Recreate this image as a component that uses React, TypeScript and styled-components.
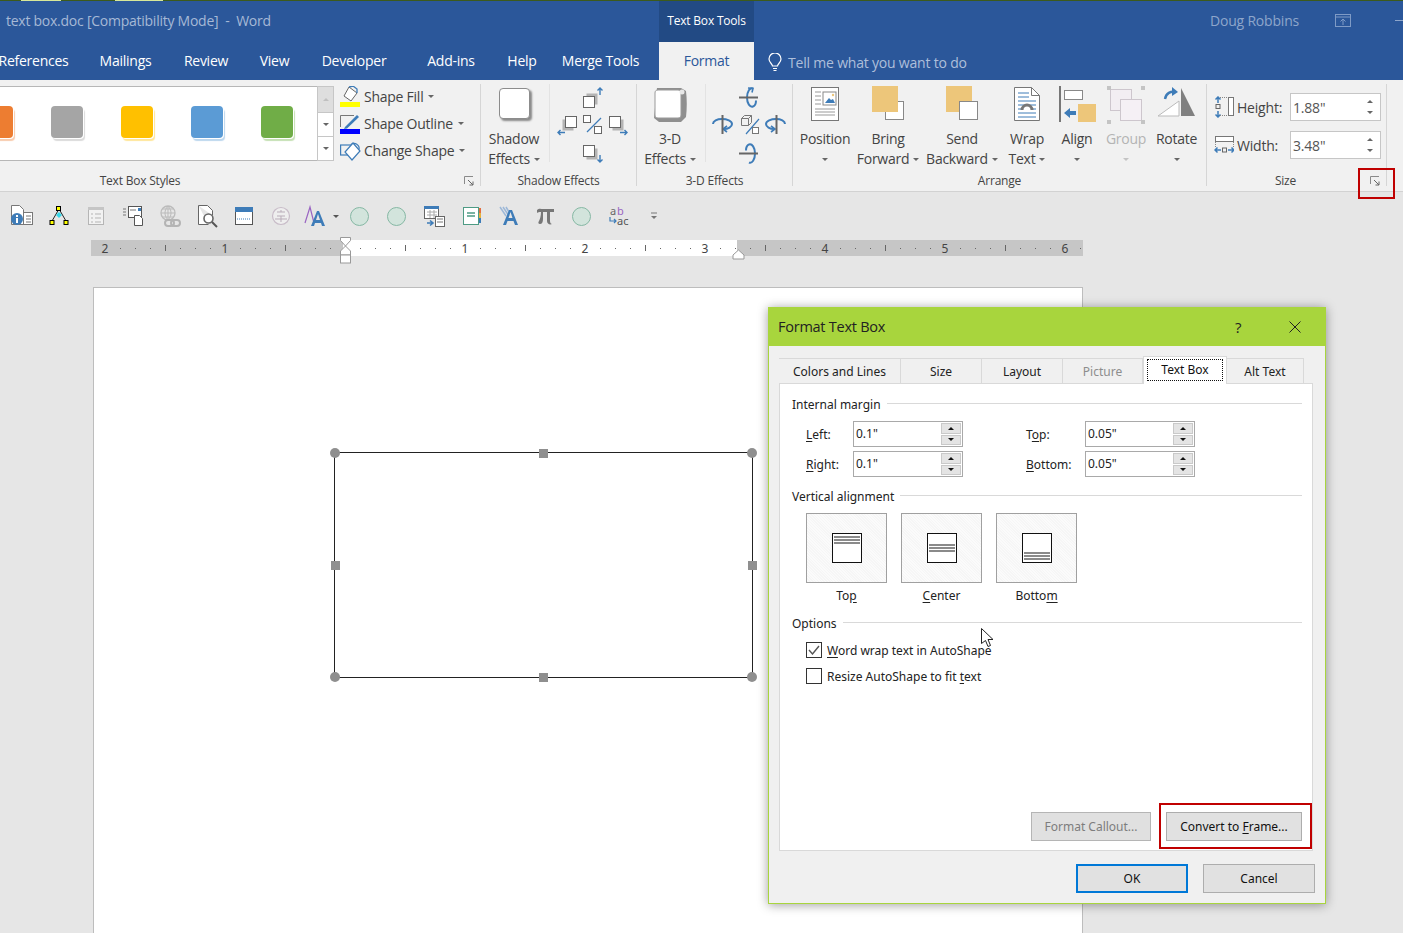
import React from "react";
import styled, { createGlobalStyle } from "styled-components";

const Global = createGlobalStyle`
  html, body {
    margin: 0;
    height: 933px;
    overflow: hidden;
    background: #e6e6e6;
  }
`;

const uiFont = `"Open Sans", "Noto Sans", Arial, sans-serif`;
const dialogFont = `"Noto Sans", "Open Sans", Arial, sans-serif`;

const Screen = styled.div`
  position: relative;
  width: 1403px;
  height: 933px;
  overflow: hidden;
  font-family: ${uiFont};
  background: #e6e6e6;
`;

const TopEdge = styled.div`
  height: 1px;
  background: #3c5a1c;
  display: flex;
`;

const EdgeAccent = styled.span<{ $w: number; $ml: number }>`
  width: ${(p) => p.$w}px;
  margin-left: ${(p) => p.$ml}px;
  background: #d8e89a;
`;

const TitleBar = styled.div`
  height: 79px;
  background: #2b579a;
  display: flex;
  flex-direction: column;
`;

const TitleRow = styled.div`
  height: 41px;
  display: flex;
  align-items: stretch;
`;

const DocTitle = styled.div`
  width: 653px;
  padding-left: 6px;
  line-height: 39px;
  font-size: 14px;
  letter-spacing: -0.25px;
  color: #a6b9d6;
  white-space: pre;
`;

const ContextHead = styled.div`
  width: 95px;
  background: #224a84;
  color: #fff;
  font-size: 12px;
  letter-spacing: -0.2px;
  line-height: 39px;
  text-align: center;
`;

const Account = styled.div`
  margin-left: auto;
  display: flex;
  align-items: center;
  height: 39px;
  color: #8ea6cb;
  font-size: 14px;
  letter-spacing: -0.2px;
`;

const UserName = styled.span`
  width: 125px;
  margin-right: 0;
`;

const WinDash = styled.span`
  width: 8px;
  height: 1px;
  margin-left: 44px;
  background: #8ea6cb;
`;

const TabRow = styled.div`
  height: 38px;
  display: flex;
  margin-left: -16px;
`;

const RibbonTab = styled.div<{ $w: number }>`
  width: ${(p) => p.$w}px;
  flex: none;
  text-align: center;
  line-height: 38px;
  color: #fff;
  font-size: 14px;
  letter-spacing: -0.25px;
  white-space: nowrap;
`;

const ActiveTab = styled(RibbonTab)`
  background: #f1f1f1;
  color: #2b579a;
  margin-left: 3px;
`;

const TellMe = styled.div`
  display: flex;
  align-items: center;
  gap: 6px;
  margin-left: 14px;
  color: #aebfdb;
  font-size: 14px;
  letter-spacing: -0.2px;
  padding-top: 2px;
`;

const Ribbon = styled.div`
  position: relative;
  height: 112px;
  box-sizing: border-box;
  background: #f1f1f1;
  border-bottom: 1px solid #d2d2d2;
  display: flex;
  color: #444;
`;

const Group = styled.div<{ $w: number }>`
  position: relative;
  width: ${(p) => p.$w}px;
  flex: none;
  display: flex;
  flex-direction: column;
`;

const GroupBody = styled.div`
  height: 91px;
  display: flex;
  position: relative;
`;

const GroupLabel = styled.div`
  height: 20px;
  line-height: 20px;
  text-align: center;
  font-size: 12px;
  letter-spacing: -0.2px;
  color: #444;
`;

const GroupSep = styled.div`
  width: 1px;
  flex: none;
  margin: 4px 0 5px;
  background: #d6d6d6;
`;

const InnerSep = styled.div<{ $ml: number }>`
  width: 1px;
  flex: none;
  height: 78px;
  margin: 4px 0 0 ${(p) => p.$ml}px;
  background: #e3e3e3;
`;

const Launcher = styled.svg`
  position: absolute;
  right: 6px;
  bottom: 5px;
`;

const Gallery = styled.div`
  margin-top: 6px;
  height: 75px;
  width: 317px;
  flex: none;
  box-sizing: border-box;
  background: #fff;
  border: 1px solid #b7b7b7;
  border-left: none;
  border-right: none;
  overflow: hidden;
  display: flex;
  align-items: center;
  gap: 38px;
  padding: 0 0 3px;
`;

const Swatch = styled.div<{ $c: string; $glow: string; $first?: boolean }>`
  width: 32px;
  height: 32px;
  flex: none;
  border-radius: 4px;
  background: ${(p) => p.$c};
  margin-left: ${(p) => (p.$first ? "-19px" : "0")};
  box-shadow: 1px 1px 0 #fff, 2px 3px 1px ${(p) => p.$glow};
`;

const ScrollStrip = styled.div`
  margin-top: 6px;
  width: 17px;
  flex: none;
  display: flex;
  flex-direction: column;
`;

const ScrollBtn = styled.div<{ $h: number; $off?: boolean }>`
  height: ${(p) => p.$h}px;
  box-sizing: border-box;
  border: 1px solid #c6c6c6;
  border-top-width: ${(p) => (p.$off ? "1px" : "0")};
  background: ${(p) => (p.$off ? "#dedede" : "#fff")};
  display: flex;
  align-items: center;
  justify-content: center;
`;

const Caret = styled.span<{ $c?: string; $up?: boolean }>`
  display: inline-block;
  flex: none;
  width: 0;
  height: 0;
  border-left: 3.5px solid transparent;
  border-right: 3.5px solid transparent;
  ${(p) => (p.$up ? "border-bottom" : "border-top")}: 3.5px solid ${(p) => p.$c || "#666"};
`;

const CommandStack = styled.div`
  margin: 3px 0 0 6px;
  display: flex;
  flex-direction: column;
`;

const Command = styled.div`
  height: 27px;
  display: flex;
  align-items: center;
  gap: 3px;
  font-size: 14px;
  letter-spacing: -0.25px;
  white-space: nowrap;

  & > svg {
    margin-right: 0;
  }
  & > span:last-child {
    margin-left: 2px;
  }
`;

const BigButton = styled.div<{ $w: number; $ml?: number; $off?: boolean }>`
  width: ${(p) => p.$w}px;
  margin-left: ${(p) => p.$ml || 0}px;
  flex: none;
  padding-top: 6px;
  display: flex;
  flex-direction: column;
  align-items: center;
  font-size: 14px;
  letter-spacing: -0.25px;
  color: ${(p) => (p.$off ? "#b4b4b4" : "#444")};
`;

const BigIcon = styled.div`
  height: 43px;
  display: flex;
  align-items: flex-start;
  justify-content: center;
`;

const ShadowTile = styled.div`
  width: 31px;
  height: 31px;
  margin-top: 2px;
  box-sizing: border-box;
  background: #fff;
  border: 1px solid #8c8c8c;
  border-radius: 4px;
  box-shadow: 2px 2px 2px #8a8a8a;
`;

const Line = styled.div`
  height: 20px;
  line-height: 20px;
  white-space: nowrap;
  display: flex;
  align-items: center;
  gap: 4px;
`;

const SideDrawing = styled.svg<{ $ml: number }>`
  margin: 5px 0 0 ${(p) => p.$ml}px;
  flex: none;
`;

const SizeStack = styled.div`
  padding: 13px 0 0 7px;
  display: flex;
  flex-direction: column;
  gap: 10px;
`;

const SizeRow = styled.div`
  display: flex;
  align-items: center;
  height: 28px;
  font-size: 14px;
  letter-spacing: -0.2px;
`;

const SizeName = styled.span`
  width: 53px;
  margin-left: 3px;
`;

const SizeInput = styled.div`
  width: 91px;
  height: 28px;
  box-sizing: border-box;
  background: #fff;
  border: 1px solid #c6c6c6;
  padding-left: 2px;
  display: flex;
  align-items: center;
  justify-content: space-between;
  color: #555;
`;

const SizeSpin = styled.div`
  width: 20px;
  display: flex;
  flex-direction: column;
  align-items: center;
  gap: 8px;
`;

const RedFrame = styled.div`
  position: absolute;
  box-sizing: border-box;
  border: 2px solid #c00000;
`;

const LauncherMark = styled(RedFrame)`
  left: 1358px;
  top: 88px;
  width: 37px;
  height: 31px;
`;

const QuickBar = styled.div`
  height: 48px;
  padding-left: 3px;
  display: flex;
  align-items: center;
`;

const QuickCell = styled.div<{ $w?: number }>`
  width: ${(p) => p.$w || 37}px;
  flex: none;
  height: 26px;
  display: flex;
  align-items: center;
  justify-content: center;
  gap: 7px;
`;

const RoundMark = styled.span`
  width: 17px;
  height: 17px;
  border-radius: 50%;
  background: #d2e4dc;
  border: 1px solid #86b8a4;
`;

const RulerWrap = styled.div`
  height: 16px;
  padding-left: 91px;
  position: relative;
  z-index: 1;

  & > svg {
    display: block;
    overflow: visible;
  }
`;

const Sheet = styled.div`
  margin: 31px 0 0 93px;
  width: 990px;
  height: 646px;
  box-sizing: border-box;
  background: #fff;
  border: 1px solid #bdbdbd;
  border-bottom: none;
  padding: 164px 0 0 240px;
`;

const TextShape = styled.div`
  position: relative;
  width: 419px;
  height: 226px;
  box-sizing: border-box;
  border: 1px solid #222;
`;

const RoundHandle = styled.span<{ $x: string; $y: string }>`
  position: absolute;
  left: ${(p) => p.$x};
  top: ${(p) => p.$y};
  width: 10px;
  height: 10px;
  margin: -5px 0 0 -5px;
  border-radius: 50%;
  background: #8f8f8f;
`;

const SquareHandle = styled(RoundHandle)`
  width: 9px;
  height: 9px;
  margin: -4.5px 0 0 -4.5px;
  border-radius: 0;
`;

const Dialog = styled.div`
  position: absolute;
  left: 768px;
  top: 307px;
  width: 558px;
  height: 597px;
  box-sizing: border-box;
  background: #f0f0f0;
  border: 1px solid #a8d53d;
  border-top: none;
  box-shadow: 0 1px 10px rgba(0, 0, 0, 0.38);
  font-family: ${dialogFont};
  font-size: 12px;
  color: #222;
`;

const DialogTitle = styled.div`
  height: 39px;
  background: #a8d53d;
  display: flex;
  align-items: center;
  padding-left: 9px;
  font-family: ${uiFont};
  font-size: 14.5px;
  letter-spacing: -0.25px;
  color: #222;
`;

const HelpMark = styled.span`
  margin-left: auto;
  width: 20px;
  text-align: center;
  font-size: 15px;
`;

const CloseMark = styled.svg`
  margin: 0 24px 0 41px;
`;

const DialogBody = styled.div`
  padding: 11px 10px 0;
`;

const TabStrip = styled.div`
  height: 26px;
  display: flex;
  align-items: flex-end;
`;

const DialogTab = styled.div<{ $w: number; $off?: boolean }>`
  width: ${(p) => p.$w}px;
  height: 25px;
  box-sizing: border-box;
  border-top: 1px solid #d9d9d9;
  border-right: 1px solid #d9d9d9;
  text-align: center;
  line-height: 25px;
  color: ${(p) => (p.$off ? "#8d8d8d" : "#222")};
`;

const CurrentTab = styled.div`
  position: relative;
  z-index: 1;
  width: 84px;
  height: 28px;
  margin-bottom: -1px;
  box-sizing: border-box;
  background: #fff;
  border: 1px solid #d9d9d9;
  border-bottom: none;
  padding: 2px 3px 3px;
  display: flex;
`;

const FocusLabel = styled.div`
  flex: 1;
  border: 1px dotted #111;
  text-align: center;
  line-height: 19px;
  color: #111;
`;

const Panel = styled.div`
  position: relative;
  width: 534px;
  height: 468px;
  box-sizing: border-box;
  background: #fff;
  border: 1px solid #d9d9d9;
  padding: 11px 10px 9px 12px;
  display: flex;
  flex-direction: column;
`;

const SectionHead = styled.div<{ $mt?: number }>`
  height: 18px;
  margin-top: ${(p) => p.$mt || 0}px;
  display: flex;
  align-items: center;
  gap: 6px;
  flex: none;

  &::after {
    content: "";
    flex: 1;
    height: 1px;
    margin-top: -2px;
    background: #d9d9d9;
  }
`;

const FieldGrid = styled.div`
  margin: 8px 0 0 14px;
  display: grid;
  grid-template-columns: 47px 110px 63px 59px 110px;
  row-gap: 4px;
  align-items: center;
`;

const Key = styled.span`
  text-decoration: underline;
  text-underline-offset: 2px;
`;

const SpinField = styled.div`
  height: 26px;
  box-sizing: border-box;
  border: 1px solid #a9a9a9;
  padding: 1px 1px 1px 2px;
  display: flex;
  align-items: stretch;
  justify-content: space-between;
  line-height: 21px;
`;

const SpinBox = styled.div`
  width: 20px;
  display: flex;
  flex-direction: column;
  gap: 1px;
`;

const SpinBtn = styled.div`
  flex: 1;
  background: #e4e4e4;
  border: 1px solid #c9c9c9;
  display: flex;
  align-items: center;
  justify-content: center;
`;

const AlignRow = styled.div`
  margin: 8px 0 0 14px;
  display: flex;
  gap: 14px;
  flex: none;
`;

const AlignChoice = styled.div`
  width: 81px;
  text-align: center;
  line-height: 16px;
`;

const AlignTile = styled.div`
  height: 70px;
  margin-bottom: 5px;
  box-sizing: border-box;
  border: 1px solid #a0a0a0;
  background: repeating-linear-gradient(45deg, #f6f6f6 0 1px, #fbfbfb 1px 2px);
  display: flex;
  align-items: center;
  justify-content: center;
`;

const AlignPage = styled.div<{ $at: string }>`
  width: 30px;
  height: 30px;
  box-sizing: border-box;
  border: 1px solid #111;
  background: #fff;
  padding: 2px 1px;
  display: flex;
  flex-direction: column;
  justify-content: ${(p) => p.$at};
`;

const AlignLines = styled.div`
  height: 8px;
  background: repeating-linear-gradient(#8a8a8a 0 2px, #fff 2px 3px);
`;

const CheckRow = styled.div<{ $mt: number }>`
  margin: ${(p) => p.$mt}px 0 0 14px;
  height: 16px;
  display: flex;
  align-items: center;
  gap: 5px;
  flex: none;
  white-space: nowrap;
`;

const CheckBox = styled.div`
  width: 16px;
  height: 16px;
  box-sizing: border-box;
  border: 1px solid #333;
  background: #fff;
  display: flex;
  align-items: center;
  justify-content: center;
`;

const PanelActions = styled.div`
  margin-top: auto;
  display: flex;
  justify-content: flex-end;
  gap: 15px;
`;

const PushButton = styled.div<{ $w: number; $off?: boolean }>`
  position: relative;
  width: ${(p) => p.$w}px;
  height: 29px;
  box-sizing: border-box;
  background: ${(p) => (p.$off ? "#e0e0e0" : "#e1e1e1")};
  border: 1px solid ${(p) => (p.$off ? "#b5b5b5" : "#adadad")};
  text-align: center;
  line-height: 28px;
  color: ${(p) => (p.$off ? "#7d7d7d" : "#111")};
`;

const DefaultButton = styled(PushButton)`
  border: 2px solid #0078d7;
  line-height: 26px;
`;

const ButtonMark = styled(RedFrame)`
  left: -8px;
  right: -11px;
  top: -10px;
  bottom: -9px;
`;

const DialogFooter = styled.div`
  width: 536px;
  margin-top: 13px;
  display: flex;
  justify-content: flex-end;
  gap: 15px;
`;

const Pointer = styled.svg`
  position: absolute;
  left: 212px;
  top: 321px;
`;

const blue = "#3e7cb8";
const grayLine = "#7d7d7d";
const sand = "#edc67a";

function LauncherIcon() {
  return (
    <Launcher width="10" height="10" viewBox="0 0 10 10" fill="none">
      <path d="M.5 8V.5H9" stroke="#8a8a8a" />
      <path d="M4 4l5 5M9 5.5V9H5.5" stroke="#666" />
    </Launcher>
  );
}

function FillIcon() {
  return (
    <svg width="21" height="22" viewBox="0 0 21 22" fill="none">
      <path d="M9 1l8 6-6 8-7-5z" fill="#fff" stroke="#666" />
      <path d="M9 1l4-1 4 3v4" stroke="#3e7cb8" strokeWidth="1.3" />
      <rect x="0" y="16" width="20" height="5" fill="#ffff00" />
    </svg>
  );
}

function OutlineIcon() {
  return (
    <svg width="21" height="22" viewBox="0 0 21 22" fill="none">
      <path d="M14 2.5H.5V14" stroke="#777" />
      <path d="M5 14L17 2l2 2L7 15.5l-3 .5z" fill="#3e7cb8" />
      <rect x="0" y="16" width="20" height="5" fill="#0000ff" />
    </svg>
  );
}

function ChangeShapeIcon() {
  return (
    <svg width="21" height="22" viewBox="0 0 21 22" fill="none" stroke="#3e7cb8" strokeWidth="1.2">
      <rect x="0.6" y="5" width="12" height="10" />
      <path d="M11 4.5a5 5 0 0 1 8 5" />
      <path d="M13 3l7 8-8 9-7-8z" fill="#fff" />
    </svg>
  );
}

function NudgeDrawing() {
  const Box = (x: number, y: number, sx: number, sy: number) => (
    <g>
      <rect x={x + sx} y={y + sy} width="11" height="11" fill="#b4b4b4" />
      <rect x={x} y={y} width="11" height="11" fill="#fff" stroke="#666" />
    </g>
  );
  return (
    <SideDrawing $ml={5} width="76" height="80" viewBox="0 0 76 80" fill="none">
      {Box(28.5, 11.5, 3, -3)}
      {Box(10.5, 31.5, -3, 3)}
      {Box(54.5, 31.5, 3, 3)}
      {Box(28.5, 60.5, 3, 3)}
      <rect x="28.5" y="30.5" width="7" height="7" fill="#fff" stroke="#666" />
      <rect x="39.5" y="41.5" width="7" height="7" fill="#fff" stroke="#666" />
      <path d="M32 47l14-14" stroke={blue} strokeWidth="1.2" />
      <path d="M45 10V3M42.500 5.500L45 3l2.500 2.500" stroke={blue} strokeWidth="1.4" />
      <path d="M45 70v7M42.500 74.500L45 77l2.500-2.500" stroke={blue} strokeWidth="1.4" />
      <path d="M10 47.500H3M5.500 45L3 47.500 5.500 50" stroke={blue} strokeWidth="1.4" />
      <path d="M65 47.500h7M69.500 45l2.500 2.500-2.500 2.500" stroke={blue} strokeWidth="1.4" />
    </SideDrawing>
  );
}

function TiltDrawing() {
  return (
    <SideDrawing $ml={4} width="80" height="80" viewBox="0 0 80 80" fill="none">
      <g stroke={blue} strokeWidth="2">
        <path d="M43 3.500c-3-1.500-6 3-6 9s3 10 6 9c2-.7 3-3 3-6" />
        <path d="M38 3l5 .5-1 4" strokeWidth="1.6" />
        <path d="M43 77.500c-3 1.500-6-3-6-9s3-10 6-9c2 .7 3 3 3 6" transform="translate(81 0) scale(-1 1) translate(-1 0)" />
        <path d="M3 39c0-3 4-5 9-5s10 2 10 5-4 5-8 5" />
        <path d="M17 41l-4 3 4 3" strokeWidth="1.6" />
        <path d="M75 39c0-3-4-5-9-5s-10 2-10 5 4 5 8 5" />
        <path d="M61 41l4 3-4 3" strokeWidth="1.6" />
      </g>
      <path d="M29 12.500h19M29 68.500h19M12.500 30v19M66.500 30v19" stroke="#666" strokeWidth="2" />
      <path d="M31.500 33.500h7v7h-7zM31.500 33.500l3-3h7v7l-3 3M38.500 33.500l3-3" stroke="#777" />
      <rect x="42.500" y="42.500" width="6" height="6" stroke="#777" fill="#fff" />
      <path d="M36 49l13-15" stroke={blue} strokeWidth="1.2" />
    </SideDrawing>
  );
}

function CubeTile() {
  return (
    <svg width="36" height="38" viewBox="0 0 36 38" fill="none">
      <path d="M5 2h24l5 3c1 8 1 18 0 26l-5 5H7l-5-4z" fill="#8f8f8f" />
      <path d="M6 4h20c2 0 3 1 3 3v22c0 2-1 3-3 3H6c-2 0-3-1-3-3V7c0-2 1-3 3-3z" fill="#fff" stroke="#999" />
      <circle cx="30" cy="6" r="2.500" fill="#e8e8e8" />
    </svg>
  );
}

function PositionIcon() {
  return (
    <svg width="30" height="36" viewBox="0 0 30 36" fill="none">
      <rect x="1.500" y="1.500" width="27" height="33" fill="#fff" stroke="#777" />
      <path d="M5 6h6M5 10h6M5 14h6M5 18h6M5 23h20M5 26h20M5 29h20" stroke="#999" />
      <rect x="13" y="6" width="13" height="13" fill="#fff" stroke="#888" />
      <path d="M15 17l4-5 2 2 2-1 2 4z" fill={blue} />
      <circle cx="23" cy="9" r="1.200" fill={sand} />
    </svg>
  );
}

function LayerIcon({ front }: { front: boolean }) {
  const sandSq = <rect x="0" y="0" width="26" height="26" fill={sand} />;
  const whiteSq = <rect x="13.500" y="15.500" width="18" height="18" fill="#fff" stroke="#888" />;
  return (
    <svg width="32" height="34" viewBox="0 0 32 34" fill="none">
      {front ? whiteSq : sandSq}
      {front ? sandSq : whiteSq}
    </svg>
  );
}

function WrapIcon() {
  return (
    <svg width="28" height="36" viewBox="0 0 28 36" fill="none">
      <path d="M1.500 1.500h17l8 8v25h-25z" fill="#fff" stroke="#777" />
      <path d="M18.500 1.500v8h8" stroke="#777" />
      <path d="M5 7h11M5 11h11M5 15h18M5 19h6M17 19h6M5 23h4M19 23h4M5 27h18M5 31h18" stroke={blue} />
      <path d="M9 24a5 5 0 0 1 10 0" stroke="#777" strokeWidth="3" />
    </svg>
  );
}

function AlignIcon() {
  return (
    <svg width="37" height="38" viewBox="0 0 37 38" fill="none">
      <path d="M1 0v36" stroke="#777" strokeWidth="2" />
      <rect x="5.500" y="4.500" width="18" height="9" fill="#fff" stroke="#888" />
      <rect x="19" y="18" width="18" height="18" fill={sand} />
      <path d="M5 27l6-5v3h6v4h-6v3z" fill={blue} />
    </svg>
  );
}

function GroupIcon() {
  return (
    <svg width="38" height="38" viewBox="0 0 38 38" fill="none">
      <rect x="3.500" y="3.500" width="21" height="21" fill="#f2eef2" stroke="#cdc6cd" />
      <rect x="13.500" y="13.500" width="21" height="21" fill="#f5f0f5" stroke="#cdc6cd" />
      <path d="M0 0h4v4H0zM34 0h4v4h-4zM0 34h4v4H0zM34 34h4v4h-4z" fill="#c4c4c4" />
    </svg>
  );
}

function RotateIcon() {
  return (
    <svg width="38" height="36" viewBox="0 0 38 36" fill="none">
      <path d="M0 30L21 15v15z" fill="#fff" stroke="#bbb" />
      <path d="M23 2l14 28H23z" fill="#808080" />
      <path d="M7 13c1-6 6-8 10-7" stroke={blue} strokeWidth="2.400" />
      <path d="M14 1l6 5-6 4z" fill={blue} />
    </svg>
  );
}

function HeightIcon() {
  return (
    <svg width="20" height="22" viewBox="0 0 20 22" fill="none">
      <path d="M4 7V1M1.500 3.500L4 1l2.500 2.500M4 15v6M1.500 18.500L4 21l2.500-2.500" stroke={blue} strokeWidth="1.500" />
      <rect x="2" y="8.500" width="4" height="4" stroke="#666" />
      <rect x="14.500" y="1.500" width="5" height="18" fill="#fff" stroke="#777" />
      <path d="M6 1.500h8M6 19.500h8" stroke="#888" strokeDasharray="1 1" />
    </svg>
  );
}

function WidthIcon() {
  return (
    <svg width="20" height="20" viewBox="0 0 20 20" fill="none">
      <rect x="1.500" y="1.500" width="18" height="5" fill="#fff" stroke="#777" />
      <path d="M1.500 7v6M19.500 7v6" stroke="#888" strokeDasharray="1 1" />
      <path d="M7 15H1M3.500 12.500L1 15l2.500 2.500M14 15h6M17.500 12.500L20 15l-2.500 2.500" stroke={blue} strokeWidth="1.500" />
      <rect x="8.500" y="13" width="4" height="4" stroke="#666" />
    </svg>
  );
}

// quick access toolbar glyphs, each drawn in a 24 box
const quickIcons: React.ReactNode[] = [
  <>
    <path d="M1.500 1.500h8l4 4v15h-12z" fill="#fff" stroke="#777" />
    <rect x="13.500" y="8.500" width="9" height="12" fill="#fff" stroke="#777" />
    <path d="M16 12h5M16 15h5M16 18h5" stroke="#777" />
    <circle cx="7" cy="15" r="6" fill={blue} />
    <rect x="6" y="14" width="2" height="5" fill="#fff" />
    <rect x="6" y="11" width="2" height="2" fill="#fff" />
  </>,
  <>
    <path d="M12 5L5 17M12 5l7 12" stroke="#222" />
    <rect x="9.500" y="2.500" width="4" height="4" fill="#ff0" stroke="#000" />
    <rect x="3" y="16.500" width="4" height="4" fill="#ff0" stroke="#000" />
    <rect x="17" y="16.500" width="4" height="4" fill="#ff0" stroke="#000" />
    <path d="M12 8l3 3-3 3-3-3z" fill="#35d6e8" />
  </>,
  <>
    <rect x="4.500" y="3.500" width="15" height="17" fill="#f2f2f2" stroke="#b5b5b5" />
    <rect x="4" y="3" width="16" height="3" fill="#c5c5c5" />
    <path d="M7 10h2M11 10h6M7 14h2M11 14h6M7 18h2M11 18h6" stroke="#b5b5b5" />
  </>,
  <>
    <path d="M2 5h3M2 8h3M2 11h3" stroke="#777" />
    <rect x="7.500" y="2.500" width="13" height="11" fill="#fff" stroke="#555" />
    <rect x="17" y="4" width="3" height="3" fill={blue} />
    <path d="M9 6h6" stroke="#777" />
    <path d="M13.500 11.500h5l3 3v7h-8z" fill="#fff" stroke="#555" />
  </>,
  <>
    <circle cx="10" cy="9" r="7" stroke="#bbb" strokeWidth="1.300" />
    <path d="M3 9h14M10 2v14M5 5h10M5 13h10" stroke="#bbb" />
    <path d="M10 2c-4 4-4 10 0 14M10 2c4 4 4 10 0 14" stroke="#bbb" />
    <rect x="7" y="16" width="9" height="6" rx="3" stroke="#b4b4b4" strokeWidth="2" />
    <rect x="13" y="16" width="9" height="6" rx="3" stroke="#b4b4b4" strokeWidth="2" />
  </>,
  <>
    <path d="M3.500 1.500h9l5 5v5M3.500 1.500v19h10" fill="#fff" stroke="#666" />
    <circle cx="13.500" cy="14.500" r="4.500" fill="#fff" stroke="#666" strokeWidth="1.600" />
    <path d="M17 18l5 5" stroke="#555" strokeWidth="2" />
  </>,
  <>
    <rect x="3.500" y="3.500" width="17" height="17" fill="#fff" stroke="#555" />
    <rect x="3" y="3" width="18" height="5" fill={blue} />
    <path d="M5 15h14" stroke={blue} strokeDasharray="1 1" />
  </>,
  <>
    <circle cx="12" cy="12" r="8.500" fill="#eee" stroke="#c8bcc8" strokeWidth="1.200" />
    <path d="M8 8h8M12 6v2M8 12h8M12 12v6M6 15h12" stroke="#b9adb9" />
  </>,
];

const quickIconsTail: React.ReactNode[] = [
  <>
    <path d="M3 19l5-16 4 16" stroke="#9a65c2" strokeWidth="1.200" />
    <path d="M9 22h3l1-3h6l1 3h3L17 7h-2zM14 16l2-6 2 6z" fill={blue} />
  </>,
];

function QuickIcon({ children }: { children: React.ReactNode }) {
  return (
    <svg width="24" height="24" viewBox="0 0 24 24" fill="none">
      {children}
    </svg>
  );
}

function Ruler() {
  const marks = [];
  for (let k = 0; k < 66; k++) {
    const x = 14 + 15 * k;
    if (k % 8 === 0) {
      if (k === 16) continue;
      marks.push(
        <text key={k} x={x} y="12.500" fontSize="12" textAnchor="middle" fill="#444" fontFamily={dialogFont}>
          {Math.abs(k / 8 - 2)}
        </text>
      );
    } else if (k % 4 === 0) {
      marks.push(<rect key={k} x={x} y="5" width="1" height="6" fill="#666" />);
    } else {
      marks.push(<rect key={k} x={x} y="8" width="1" height="1" fill="#666" />);
    }
  }
  return (
    <RulerWrap>
      <svg width="992" height="16" viewBox="0 0 992 16">
        <rect x="0" y="0" width="992" height="16" fill="#c6c6c6" />
        <rect x="252" y="0" width="394" height="16" fill="#fff" />
        {marks}
        <path d="M249.500-2.500h10v3l-5 5.500-5-5.500z" fill="#fff" stroke="#999" />
        <path d="M254.500 6l5 5v4h-10v-4z" fill="#fff" stroke="#999" />
        <rect x="249.500" y="15" width="10" height="8" fill="#fff" stroke="#999" />
        <path d="M647.500 10l5.500 5v4h-11v-4z" fill="#fff" stroke="#999" />
      </svg>
    </RulerWrap>
  );
}

function SpinInput({ value }: { value: string }) {
  return (
    <SpinField>
      <span>{value}</span>
      <SpinBox>
        <SpinBtn>
          <Caret $up $c="#111" />
        </SpinBtn>
        <SpinBtn>
          <Caret $c="#111" />
        </SpinBtn>
      </SpinBox>
    </SpinField>
  );
}

function App() {
  return (
    <Screen>
      <Global />
      <TopEdge>
        <EdgeAccent $w={40} $ml={21} />
        <EdgeAccent $w={48} $ml={54} />
      </TopEdge>
      <TitleBar>
        <TitleRow>
          <DocTitle>text box.doc [Compatibility Mode]  -  Word</DocTitle>
          <ContextHead>Text Box Tools</ContextHead>
          <Account>
            <UserName>Doug Robbins</UserName>
            <svg width="16" height="14" viewBox="0 0 16 14" fill="none" stroke="#7f9bc6">
              <rect x="0.500" y="0.500" width="15" height="12" />
              <path d="M.5 3h15M8 11V5M5.500 7.500L8 5l2.500 2.500" />
            </svg>
            <WinDash />
          </Account>
        </TitleRow>
        <TabRow>
          <RibbonTab $w={99}>References</RibbonTab>
          <RibbonTab $w={85}>Mailings</RibbonTab>
          <RibbonTab $w={76}>Review</RibbonTab>
          <RibbonTab $w={61}>View</RibbonTab>
          <RibbonTab $w={98}>Developer</RibbonTab>
          <RibbonTab $w={96}>Add-ins</RibbonTab>
          <RibbonTab $w={46}>Help</RibbonTab>
          <RibbonTab $w={111}>Merge Tools</RibbonTab>
          <ActiveTab $w={95}>Format</ActiveTab>
          <TellMe>
            <svg width="14" height="19" viewBox="0 0 14 19" fill="none" stroke="#fff" strokeWidth="1.200">
              <path d="M4.500 13c0-2-3.500-3.500-3.500-7a6 6 0 0 1 12 0c0 3.500-3.500 5-3.500 7z" />
              <path d="M5 15.500h4M5.500 17.500h3" />
            </svg>
            Tell me what you want to do
          </TellMe>
        </TabRow>
      </TitleBar>

      <Ribbon>
        <Group $w={480}>
          <GroupBody>
            <Gallery>
              <Swatch $first $c="#ed7d31" $glow="#f8cbad" />
              <Swatch $c="#a5a5a5" $glow="#dbdbdb" />
              <Swatch $c="#ffc000" $glow="#ffe699" />
              <Swatch $c="#5b9bd5" $glow="#bdd7ee" />
              <Swatch $c="#70ad47" $glow="#c5e0b4" />
            </Gallery>
            <ScrollStrip>
              <ScrollBtn $h={27} $off>
                <Caret $up $c="#c0c0c0" />
              </ScrollBtn>
              <ScrollBtn $h={24}>
                <Caret />
              </ScrollBtn>
              <ScrollBtn $h={24}>
                <Caret />
              </ScrollBtn>
            </ScrollStrip>
            <CommandStack>
              <Command>
                <FillIcon />
                Shape Fill
                <Caret />
              </Command>
              <Command>
                <OutlineIcon />
                Shape Outline
                <Caret />
              </Command>
              <Command>
                <ChangeShapeIcon />
                Change Shape
                <Caret />
              </Command>
            </CommandStack>
          </GroupBody>
          <GroupLabel style={{ paddingRight: 200 }}>Text Box Styles</GroupLabel>
          <LauncherIcon />
        </Group>
        <GroupSep />

        <Group $w={155}>
          <GroupBody>
            <BigButton $w={62} $ml={2}>
              <BigIcon>
                <ShadowTile />
              </BigIcon>
              <Line>Shadow</Line>
              <Line>
                Effects <Caret />
              </Line>
            </BigButton>
            <InnerSep $ml={4} />
            <NudgeDrawing />
          </GroupBody>
          <GroupLabel>Shadow Effects</GroupLabel>
        </Group>
        <GroupSep />

        <Group $w={155}>
          <GroupBody>
            <BigButton $w={66}>
              <BigIcon>
                <CubeTile />
              </BigIcon>
              <Line>3-D</Line>
              <Line>
                Effects <Caret />
              </Line>
            </BigButton>
            <InnerSep $ml={2} />
            <TiltDrawing />
          </GroupBody>
          <GroupLabel>3-D Effects</GroupLabel>
        </Group>
        <GroupSep />

        <Group $w={413}>
          <GroupBody>
            <BigButton $w={64}>
              <BigIcon>
                <PositionIcon />
              </BigIcon>
              <Line>Position</Line>
              <Line>
                <Caret />
              </Line>
            </BigButton>
            <BigButton $w={62}>
              <BigIcon>
                <LayerIcon front />
              </BigIcon>
              <Line>Bring</Line>
              <Line>
                Forward <Caret />
              </Line>
            </BigButton>
            <BigButton $w={86}>
              <BigIcon>
                <LayerIcon front={false} />
              </BigIcon>
              <Line>Send</Line>
              <Line>
                Backward <Caret />
              </Line>
            </BigButton>
            <BigButton $w={44}>
              <BigIcon>
                <WrapIcon />
              </BigIcon>
              <Line>Wrap</Line>
              <Line>
                Text <Caret />
              </Line>
            </BigButton>
            <BigButton $w={56}>
              <BigIcon>
                <AlignIcon />
              </BigIcon>
              <Line>Align</Line>
              <Line>
                <Caret />
              </Line>
            </BigButton>
            <BigButton $w={42} $off>
              <BigIcon>
                <GroupIcon />
              </BigIcon>
              <Line>Group</Line>
              <Line>
                <Caret $c="#c4c4c4" />
              </Line>
            </BigButton>
            <BigButton $w={59}>
              <BigIcon>
                <RotateIcon />
              </BigIcon>
              <Line>Rotate</Line>
              <Line>
                <Caret />
              </Line>
            </BigButton>
          </GroupBody>
          <GroupLabel>Arrange</GroupLabel>
        </Group>
        <GroupSep />

        <Group $w={179}>
          <GroupBody>
            <SizeStack>
              <SizeRow>
                <HeightIcon />
                <SizeName>Height:</SizeName>
                <SizeInput>
                  1.88"
                  <SizeSpin>
                    <Caret $up />
                    <Caret />
                  </SizeSpin>
                </SizeInput>
              </SizeRow>
              <SizeRow>
                <WidthIcon />
                <SizeName>Width:</SizeName>
                <SizeInput>
                  3.48"
                  <SizeSpin>
                    <Caret $up />
                    <Caret />
                  </SizeSpin>
                </SizeInput>
              </SizeRow>
            </SizeStack>
          </GroupBody>
          <GroupLabel style={{ paddingLeft: 0, paddingRight: 22 }}>Size</GroupLabel>
          <LauncherIcon />
        </Group>
        <GroupSep />
        <LauncherMark />
      </Ribbon>

      <QuickBar>
        {quickIcons.map((icon, i) => (
          <QuickCell key={i}>
            <QuickIcon>{icon}</QuickIcon>
          </QuickCell>
        ))}
        <QuickCell $w={42}>
          <QuickIcon>{quickIconsTail[0]}</QuickIcon>
          <Caret $c="#555" />
        </QuickCell>
        <QuickCell>
          <RoundMark />
        </QuickCell>
        <QuickCell>
          <RoundMark />
        </QuickCell>
        <QuickCell>
          <QuickIcon>
            <rect x="2.500" y="2.500" width="14" height="12" fill="#fff" stroke="#666" />
            <rect x="2" y="2" width="15" height="3" fill={blue} />
            <path d="M5 8h10M5 11h10M8 6v8M12 6v8" stroke="#aaa" />
            <rect x="13.500" y="12.500" width="9" height="10" fill="#fff" stroke="#666" />
            <path d="M15 15h6M15 18h6" stroke="#777" />
            <path d="M5 19h6M8 16.500L11 19l-3 2.500" stroke={blue} strokeWidth="1.600" />
          </QuickIcon>
        </QuickCell>
        <QuickCell>
          <QuickIcon>
            <rect x="4.500" y="3.500" width="15" height="17" fill="#fff" stroke="#4e9b84" />
            <path d="M8 9h8M8 12h8" stroke="#4e9b84" strokeWidth="1.500" />
            <path d="M20 4h2v5h-2z" fill="#e26d3e" />
            <path d="M20 9h2v5h-2z" fill="#e8b13c" />
            <path d="M20 14h2v5h-2z" fill={blue} />
          </QuickIcon>
        </QuickCell>
        <QuickCell>
          <QuickIcon>
            <path d="M4 3l6 9M7 3l6 9M10 3l3 5" stroke="#9db8d8" strokeWidth="1.500" />
            <path d="M7 21h3l1.500-4h6L19 21h3L16 6h-3zM12.500 14l2-6 2 6z" fill={blue} />
          </QuickIcon>
        </QuickCell>
        <QuickCell>
          <QuickIcon>
            <path d="M4 6c2-2 4-1 6-1h11v3h-4v9c0 2 1 3 2 3-2 1-5 0-5-3V8h-4v7c0 3-1 5-3 5s-2-2-1-3c1-2 2-5 2-9-2 0-3 0-4 1z" fill="#777" />
          </QuickIcon>
        </QuickCell>
        <QuickCell>
          <RoundMark />
        </QuickCell>
        <QuickCell>
          <QuickIcon>
            <text x="3" y="11" fontSize="11" fill="#666" fontFamily={dialogFont}>
              a
            </text>
            <text x="10" y="11" fontSize="11" fill="#9a65c2" fontFamily={dialogFont}>
              b
            </text>
            <text x="10" y="21" fontSize="11" fill="#555" fontFamily={dialogFont}>
              ac
            </text>
            <path d="M3 13v4h6M7 15l2 2-2 2" stroke={blue} strokeWidth="1.200" />
          </QuickIcon>
        </QuickCell>
        <QuickCell $w={33}>
          <QuickIcon>
            <path d="M9 9h6" stroke="#777" />
            <path d="M9 12h6l-3 3z" fill="#777" />
          </QuickIcon>
        </QuickCell>
      </QuickBar>

      <Ruler />

      <Sheet>
        <TextShape>
          <RoundHandle $x="0" $y="0" />
          <SquareHandle $x="50%" $y="0" />
          <RoundHandle $x="100%" $y="0" />
          <SquareHandle $x="0" $y="50%" />
          <SquareHandle $x="100%" $y="50%" />
          <RoundHandle $x="0" $y="100%" />
          <SquareHandle $x="50%" $y="100%" />
          <RoundHandle $x="100%" $y="100%" />
        </TextShape>
      </Sheet>

      <Dialog>
        <DialogTitle>
          Format Text Box
          <HelpMark>?</HelpMark>
          <CloseMark width="12" height="12" viewBox="0 0 12 12" fill="none" stroke="#222">
            <path d="M.5.5l11 11M11.500.5l-11 11" />
          </CloseMark>
        </DialogTitle>
        <DialogBody>
          <TabStrip>
            <DialogTab $w={122}>Colors and Lines</DialogTab>
            <DialogTab $w={81}>Size</DialogTab>
            <DialogTab $w={81}>Layout</DialogTab>
            <DialogTab $w={80} $off>
              Picture
            </DialogTab>
            <CurrentTab>
              <FocusLabel>Text Box</FocusLabel>
            </CurrentTab>
            <DialogTab $w={77}>Alt Text</DialogTab>
          </TabStrip>
          <Panel>
            <SectionHead>Internal margin</SectionHead>
            <FieldGrid>
              <span>
                <Key>L</Key>eft:
              </span>
              <SpinInput value={'0.1"'} />
              <span />
              <span>
                T<Key>o</Key>p:
              </span>
              <SpinInput value={'0.05"'} />
              <span>
                <Key>R</Key>ight:
              </span>
              <SpinInput value={'0.1"'} />
              <span />
              <span>
                <Key>B</Key>ottom:
              </span>
              <SpinInput value={'0.05"'} />
            </FieldGrid>
            <SectionHead $mt={10}>Vertical alignment</SectionHead>
            <AlignRow>
              <AlignChoice>
                <AlignTile>
                  <AlignPage $at="flex-start">
                    <AlignLines />
                  </AlignPage>
                </AlignTile>
                To<Key>p</Key>
              </AlignChoice>
              <AlignChoice>
                <AlignTile>
                  <AlignPage $at="center">
                    <AlignLines />
                  </AlignPage>
                </AlignTile>
                <Key>C</Key>enter
              </AlignChoice>
              <AlignChoice>
                <AlignTile>
                  <AlignPage $at="flex-end">
                    <AlignLines />
                  </AlignPage>
                </AlignTile>
                Botto<Key>m</Key>
              </AlignChoice>
            </AlignRow>
            <SectionHead $mt={10}>Options</SectionHead>
            <CheckRow $mt={10}>
              <CheckBox>
                <svg width="12" height="10" viewBox="0 0 12 10" fill="none" stroke="#555" strokeWidth="1.400">
                  <path d="M1 5l3.500 4L11 1" />
                </svg>
              </CheckBox>
              <span>
                <Key>W</Key>ord wrap text in AutoShape
              </span>
            </CheckRow>
            <CheckRow $mt={10}>
              <CheckBox />
              <span>
                Resize AutoShape to fit <Key>t</Key>ext
              </span>
            </CheckRow>
            <PanelActions>
              <PushButton $w={120} $off>
                Format Callout...
              </PushButton>
              <PushButton $w={136}>
                Convert to <Key>F</Key>rame...
                <ButtonMark />
              </PushButton>
            </PanelActions>
          </Panel>
          <DialogFooter>
            <DefaultButton $w={112}>OK</DefaultButton>
            <PushButton $w={112}>Cancel</PushButton>
          </DialogFooter>
        </DialogBody>
        <Pointer width="13" height="20" viewBox="0 0 13 20" fill="none">
          <path d="M.5.5v15l4-3 2.500 6 2.500-1-2.500-6h5z" fill="#fff" stroke="#222" />
        </Pointer>
      </Dialog>
    </Screen>
  );
}

export default App;
